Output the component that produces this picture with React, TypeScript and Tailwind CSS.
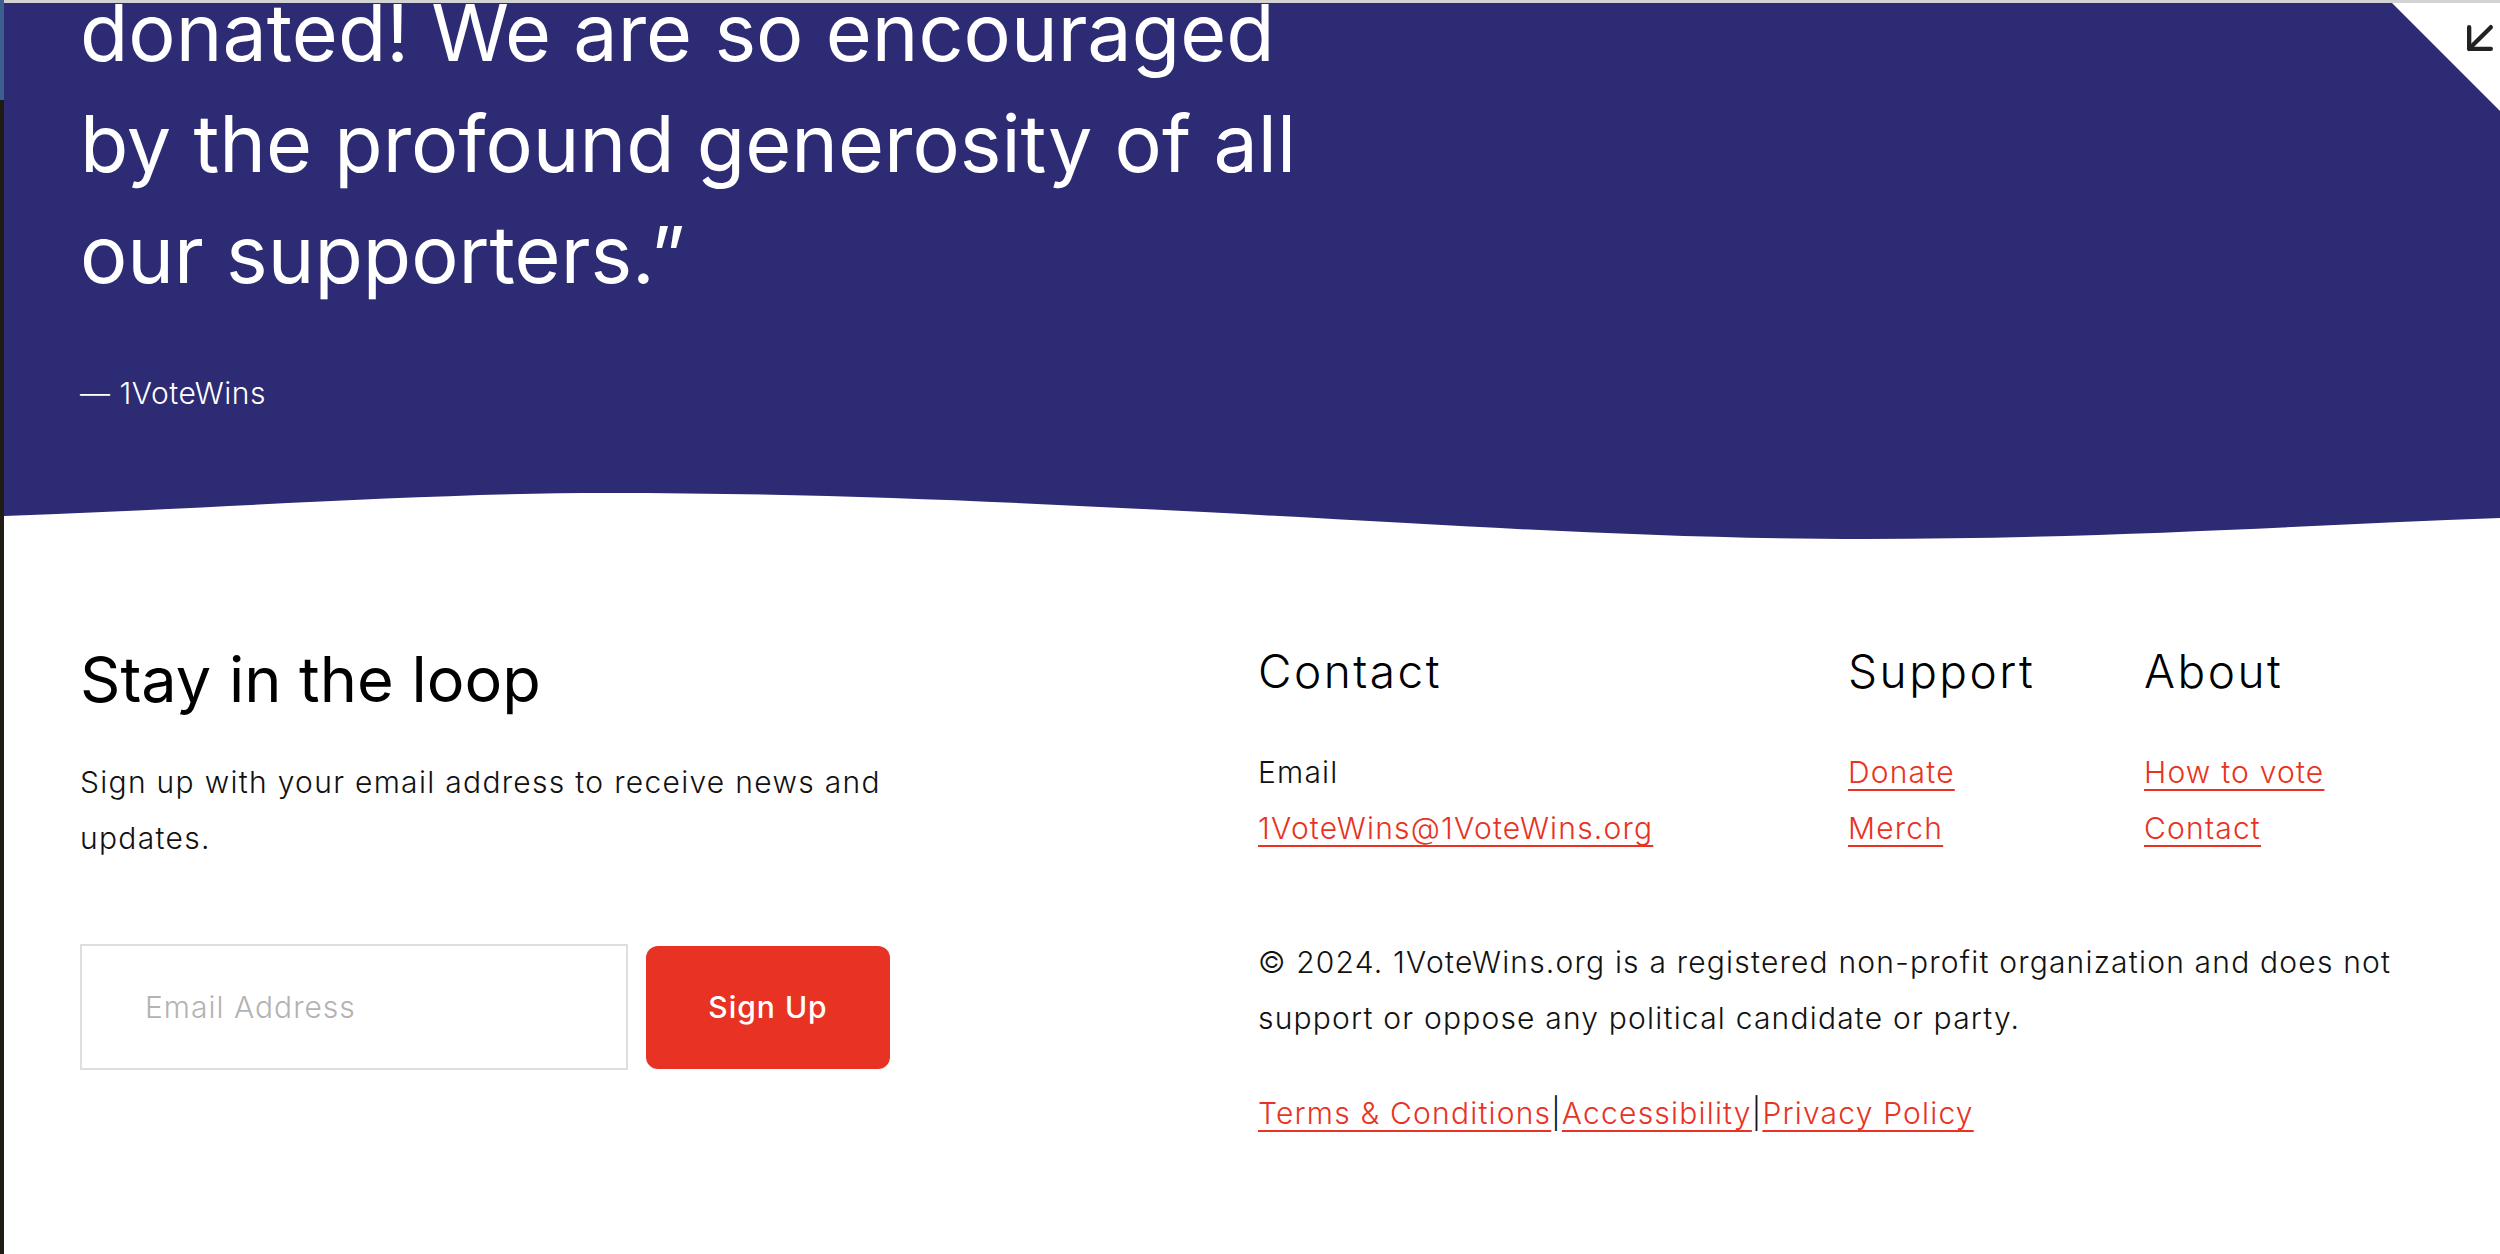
import React from "react";
import { ArrowDownLeft } from "lucide-react";

const FooterLink = ({ children }: { children: React.ReactNode }) => (
  <a
    href="#"
    className="text-[#e83324] underline decoration-[2px] underline-offset-[6px]"
  >
    {children}
  </a>
);

const App = () => {
  return (
    <div className="w-[2500px] h-[1254px] overflow-hidden flex bg-white relative font-['Inter',sans-serif]">
      {/* sliver of whatever sits behind the window */}
      <div className="w-[4px] flex flex-col shrink-0">
        <div className="h-[100px] bg-[#3d5f8f]" />
        <div className="flex-1 bg-[#1f1c13]" />
      </div>

      <div className="flex-1 flex flex-col">
        <div className="h-[3px] bg-[#d3d3d3]" />

        <section className="h-[487px] bg-[#2c2b73] pl-[76px] overflow-hidden [clip-path:polygon(0_0,calc(100%-108px)_0,100%_108px,100%_100%,0_100%)]">
          <p className="mt-[-26px] text-white text-[79px] leading-[111px] font-normal">
            donated! We are so encouraged
            <br />
            by the profound generosity of all
            <br />
            our supporters.”
          </p>
          <p className="mt-[61px] text-white text-[30px] leading-[45px] font-light tracking-[0.5px]">
            — 1VoteWins
          </p>
        </section>

        <svg
          className="block w-full h-[50px]"
          viewBox="0 0 2496 50"
          preserveAspectRatio="none"
        >
          <path
            d="M0 0 L0 26 C220 18 430 3 602 3 C820 3 1000 12 1200 22 C1450 35 1640 49 1861 49 C2100 49 2300 35 2496 28 L2496 0 Z"
            fill="#2c2b73"
          />
        </svg>

        <footer className="flex pl-[76px] pr-[80px] pt-[108px]">
          <div className="w-[1178px] shrink-0">
            <h2 className="text-[63px] leading-none font-normal text-black">
              Stay in the loop
            </h2>
            <p className="mt-[43px] text-[30px] leading-[56px] font-light tracking-[1.3px] text-[#111]">
              Sign up with your email address to receive news and
              <br />
              updates.
            </p>
            <form className="mt-[78px] flex items-center gap-[18px]">
              <input
                type="email"
                placeholder="Email Address"
                className="w-[548px] h-[126px] border-2 border-[#dedede] pl-[63px] text-[30px] font-light tracking-[1px] outline-none placeholder:text-[#b3b3b3]"
              />
              <button
                type="button"
                className="w-[244px] h-[123px] rounded-[12px] bg-[#e83324] text-white text-[30px] font-medium tracking-[1px]"
              >
                Sign Up
              </button>
            </form>
          </div>

          <div className="flex-1 text-[#111]">
            <div className="flex">
              <div className="w-[590px] shrink-0">
                <h3 className="text-[46px] leading-none font-light tracking-[2.5px] text-black">Contact</h3>
                <div className="mt-[50px] text-[30px] leading-[56px] font-light tracking-[1.2px]">
                  <div>Email</div>
                  <FooterLink>1VoteWins@1VoteWins.org</FooterLink>
                </div>
              </div>
              <div className="w-[296px] shrink-0">
                <h3 className="text-[46px] leading-none font-light tracking-[2.5px] text-black">Support</h3>
                <div className="mt-[50px] text-[30px] leading-[56px] font-light tracking-[1.2px] flex flex-col items-start">
                  <FooterLink>Donate</FooterLink>
                  <FooterLink>Merch</FooterLink>
                </div>
              </div>
              <div>
                <h3 className="text-[46px] leading-none font-light tracking-[2.5px] text-black">About</h3>
                <div className="mt-[50px] text-[30px] leading-[56px] font-light tracking-[1.2px] flex flex-col items-start">
                  <FooterLink>How to vote</FooterLink>
                  <FooterLink>Contact</FooterLink>
                </div>
              </div>
            </div>

            <p className="mt-[78px] text-[30px] leading-[56px] font-light tracking-[1.2px]">
              © 2024. 1VoteWins.org is a registered non-profit organization and does not
              <br />
              support or oppose any political candidate or party.
            </p>

            <p className="mt-[39px] text-[30px] leading-[56px] font-light tracking-[1.2px]">
              <FooterLink>Terms &amp; Conditions</FooterLink>|
              <FooterLink>Accessibility</FooterLink>|
              <FooterLink>Privacy Policy</FooterLink>
            </p>
          </div>
        </footer>
      </div>

      <ArrowDownLeft
        size={52}
        strokeWidth={2}
        className="absolute top-[12px] right-[-6px] text-[#222]"
      />
    </div>
  );
};

export default App;
